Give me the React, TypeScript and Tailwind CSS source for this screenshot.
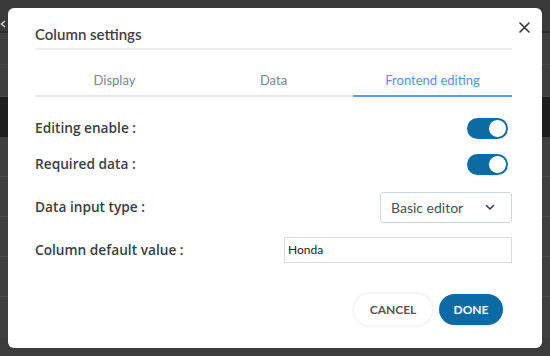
import React from "react";

function Toggle() {
  return (
    <div className="w-[41px] h-[21px] rounded-full bg-[#0b6ba4] flex items-center justify-end p-[1px] mr-[4px]">
      <div className="w-[19px] h-[19px] rounded-full bg-white border border-[#0b6ba4]" />
    </div>
  );
}

export default function App() {
  const font = { fontFamily: "Lato, 'Open Sans', sans-serif" };
  const labelFont = { fontFamily: "'Open Sans', Lato, sans-serif" };
  return (
    <div className="relative w-[550px] h-[356px] bg-[#3c3c3c] overflow-hidden" style={font}>
      {/* underlying page */}
      <div className="flex flex-col w-full">
        <div className="h-[33px] border-b-2 border-[#2a2a2a] bg-[#3a3a3a] flex items-end pb-[3px]">
          <svg width="6" height="8" viewBox="0 0 6 8" className="ml-[0px]">
            <path d="M5 1L1.5 4L5 7" stroke="#d8d8d8" strokeWidth="1.4" fill="none" />
          </svg>
        </div>
        <div className="h-[32px] border-b border-[#4a4a4a] bg-[#404040]" />
        <div className="h-[32px] border-b border-[#4a4a4a] bg-[#404040]" />
        <div className="h-[40px] bg-[#1e1e1e]" />
        <div className="h-[40px] border-b border-[#4c4c4c] bg-[#3f3f3f]" />
        <div className="h-[40px] border-b border-[#4c4c4c] bg-[#3f3f3f]" />
        <div className="h-[40px] border-b border-[#4c4c4c] bg-[#3f3f3f]" />
        <div className="h-[40px] border-b border-[#4c4c4c] bg-[#3f3f3f]" />
        <div className="h-[40px] bg-[#3f3f3f]" />
      </div>

      {/* modal */}
      <div className="absolute left-[8px] top-[8px] w-[534px] h-[340px] bg-white rounded-[6px] flex flex-col pl-[27px] pr-[30px]">
        <button className="absolute right-[11px] top-[12px] w-[14px] h-[14px] flex items-center justify-center">
          <svg width="11" height="11" viewBox="0 0 11 11">
            <path d="M1 1L10 10M10 1L1 10" stroke="#2f343b" strokeWidth="1.6" strokeLinecap="round" />
          </svg>
        </button>

        <div className="pt-[16px] pb-[4px] border-b-2 border-[#ededed]">
          <div className="text-[15px] leading-[20px] font-semibold text-[#3c4148]">Column settings</div>
        </div>

        <div className="grid grid-cols-3">
          <div className="pt-[22px] pb-[7px] border-b-2 border-[#e8e8e8] text-center text-[13px] leading-[16px] text-[#7b8593]">Display</div>
          <div className="pt-[22px] pb-[7px] border-b-2 border-[#e8e8e8] text-center text-[13px] leading-[16px] text-[#7b8593]">Data</div>
          <div className="pt-[22px] pb-[7px] border-b-2 border-[#5a9ded] text-center text-[13px] leading-[16px] text-[#4f95e8]">Frontend editing</div>
        </div>

        <div className="pt-[13px] flex flex-col text-[14px] text-[#3a3f46]">
          <div className="h-[36px] flex items-center justify-between">
            <span className="font-semibold text-[13.7px]" style={labelFont}>Editing enable :</span>
            <Toggle />
          </div>
          <div className="h-[36px] flex items-center justify-between">
            <span className="font-semibold text-[13.7px]" style={labelFont}>Required data :</span>
            <Toggle />
          </div>
          <div className="h-[50px] flex items-center justify-between">
            <span className="font-semibold text-[13.7px]" style={labelFont}>Data input type :</span>
            <div className="w-[132px] h-[31px] border border-[#cfd6de] rounded-[3px] flex items-center justify-between pl-[10px] pr-[16px] font-normal text-[14px] text-[#4a4f56]">
              <span>Basic editor</span>
              <svg width="10" height="7" viewBox="0 0 10 7">
                <path d="M1.5 1.5L5 5L8.5 1.5" stroke="#3a3f46" strokeWidth="1.6" fill="none" strokeLinecap="round" strokeLinejoin="round" />
              </svg>
            </div>
          </div>
          <div className="h-[36px] flex items-center justify-between">
            <span className="font-semibold text-[13.7px]" style={labelFont}>Column default value :</span>
            <div className="w-[228px] h-[26px] border border-[#dcdcdc] flex items-center pl-[3px] font-normal text-[12px] text-[#222]">
              Honda
            </div>
          </div>
        </div>

        <div className="mt-[26px] flex justify-end gap-[7px] pr-[9px]">
          <button className="w-[78px] h-[31px] rounded-full bg-white shadow-[0_0_4px_rgba(0,0,0,0.12)] text-[12px] font-bold text-[#555]">CANCEL</button>
          <button className="w-[64px] h-[31px] rounded-full bg-[#0b6ba4] text-[12px] font-bold text-white">DONE</button>
        </div>
      </div>
    </div>
  );
}
